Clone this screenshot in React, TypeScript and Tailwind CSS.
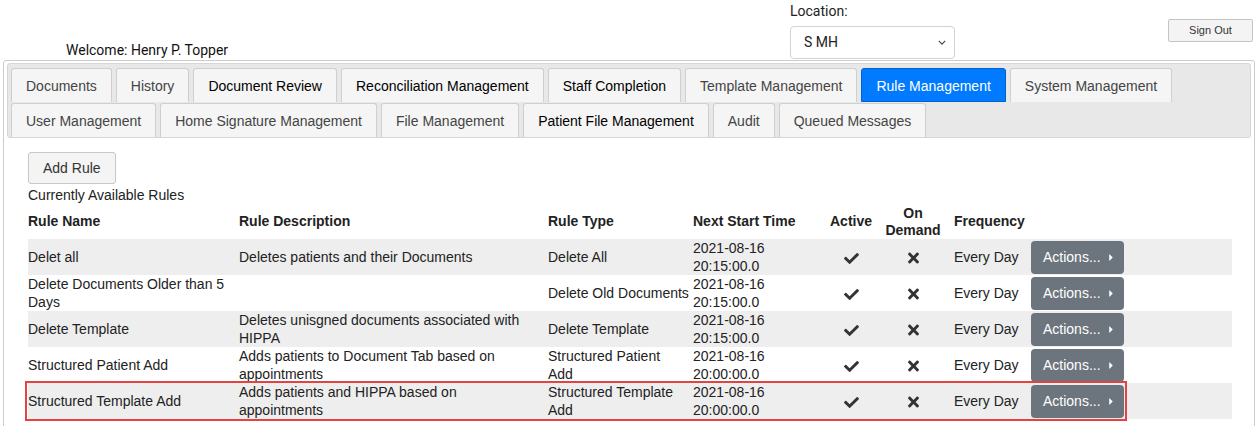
import React from 'react';

const rowOneTabs = [
  { label: 'Documents', dark: false },
  { label: 'History', dark: false },
  { label: 'Document Review', dark: true },
  { label: 'Reconciliation Management', dark: true },
  { label: 'Staff Completion', dark: true },
  { label: 'Template Management', dark: false },
  { label: 'Rule Management', dark: false, active: true },
  { label: 'System Management', dark: false },
];

const rowTwoTabs = [
  { label: 'User Management', dark: false },
  { label: 'Home Signature Management', dark: false },
  { label: 'File Management', dark: false },
  { label: 'Patient File Management', dark: true },
  { label: 'Audit', dark: false },
  { label: 'Queued Messages', dark: false },
];

// line breaks kept as in the original table rendering
const rules = [
  { name: 'Delet all', desc: 'Deletes patients and their Documents', type: 'Delete All', time: '20:15:00.0' },
  { name: 'Delete Documents Older than 5\nDays', desc: '', type: 'Delete Old Documents', time: '20:15:00.0' },
  { name: 'Delete Template', desc: 'Deletes unisgned documents associated with\nHIPPA', type: 'Delete Template', time: '20:15:00.0' },
  { name: 'Structured Patient Add', desc: 'Adds patients to Document Tab based on\nappointments', type: 'Structured Patient\nAdd', time: '20:00:00.0' },
  { name: 'Structured Template Add', desc: 'Adds patients and HIPPA based on\nappointments', type: 'Structured Template\nAdd', time: '20:00:00.0' },
];

type Tab = { label: string; dark: boolean; active?: boolean };

function TabButton({ tab }: { tab: Tab }) {
  if (tab.active) {
    return (
      <div className="h-[34px] flex items-center pt-[2px] px-[14px] border border-[#0062cc] rounded-t-[3px] bg-[#007bff] text-white">
        {tab.label}
      </div>
    );
  }
  return (
    <div
      className={
        'h-[34px] flex items-center pt-[2px] px-[14px] border border-[#cfcfcf] border-b-0 rounded-t-[3px] bg-[#f5f5f5] ' +
        (tab.dark ? 'text-[#000]' : 'text-[#444]')
      }
    >
      {tab.label}
    </div>
  );
}

function CheckIcon() {
  return (
    <svg viewBox="0 0 512 512" className="w-[15px] h-[15px] inline-block" fill="#333">
      <path d="M173.898 439.404l-166.4-166.4c-9.997-9.997-9.997-26.206 0-36.204l36.203-36.204c9.997-9.998 26.207-9.998 36.204 0L192 312.69 432.095 72.596c9.997-9.997 26.207-9.997 36.204 0l36.203 36.204c9.997 9.997 9.997 26.206 0 36.204l-294.4 294.401c-9.998 9.997-26.207 9.997-36.204-.001z" />
    </svg>
  );
}

function TimesIcon() {
  return (
    <svg viewBox="0 0 352 512" className="w-[11px] h-[16px] inline-block" fill="#333">
      <path d="M242.72 256l100.07-100.07c12.28-12.28 12.28-32.19 0-44.48l-22.24-22.240c-12.28-12.28-32.19-12.28-44.48 0L176 189.28 75.93 89.21c-12.28-12.28-32.19-12.28-44.48 0L9.21 111.45c-12.28 12.28-12.28 32.19 0 44.48L109.28 256 9.21 356.07c-12.28 12.28-12.28 32.19 0 44.48l22.24 22.24c12.28 12.28 32.2 12.28 44.48 0L176 322.72l100.07 100.07c12.28 12.28 32.2 12.28 44.48 0l22.24-22.24c12.28-12.28 12.28-32.19 0-44.48L242.72 256z" />
    </svg>
  );
}

export default function App() {
  return (
    <div className="w-[1258px] h-[426px] overflow-hidden bg-white text-[14px] text-[#222] font-['Liberation_Sans',Arial,sans-serif]">
      {/* header: welcome, location picker, sign out */}
      <div className="flex h-[60px]">
        <div className="w-[790px] pl-[66px] pt-[40px] text-[14px] text-[#111] font-['Roboto',sans-serif]">
          Welcome: Henry P. Topper
        </div>
        <div className="w-[378px] pt-[1px] font-['Roboto',sans-serif] text-[#222]">
          <div className="h-[20px] leading-[20px]">Location:</div>
          <div className="mt-[5px] w-[165px] h-[33px] border border-[#ced4da] rounded-[4px] flex items-center justify-between pl-[13px] pr-[8px] bg-white">
            <span>S MH</span>
            <svg viewBox="0 0 10 6" className="w-[8px] h-[5px]" fill="none" stroke="#444" strokeWidth="1.4">
              <path d="M1 1l4 4 4-4" />
            </svg>
          </div>
        </div>
        <div className="pt-[19px]">
          <button className="w-[85px] h-[23px] border border-[#c4c4c4] rounded-[2px] bg-[#f4f4f4] text-[11px] text-[#333]">
            Sign Out
          </button>
        </div>
      </div>

      {/* main panel */}
      <div className="mx-[3px] h-[380px] border border-[#cccccc] rounded-[3px] px-[3px] pt-[2px]">
        <div className="bg-[#e8e8e8] border border-[#d6d6d6] rounded-[3px] px-[3px] pt-[4px] flex flex-col gap-[1px]">
          <div className="flex gap-[4px]">
            {rowOneTabs.map((t) => (
              <TabButton key={t.label} tab={t} />
            ))}
          </div>
          <div className="flex gap-[4px]">
            {rowTwoTabs.map((t) => (
              <TabButton key={t.label} tab={t} />
            ))}
          </div>
        </div>

        <div className="pl-[21px] pt-[14px]">
          <button className="h-[32px] px-[14px] border border-[#c8c8c8] rounded-[3px] bg-[#f4f4f4] text-[#333]">
            Add Rule
          </button>
          <div className="mt-[2px] h-[18px] leading-[18px] text-[#222]">Currently Available Rules</div>

          <div className="relative w-[1204px]">
            <table className="w-[1204px] table-fixed border-collapse leading-[18px]">
              <colgroup>
                <col className="w-[211px]" />
                <col className="w-[309px]" />
                <col className="w-[145px]" />
                <col className="w-[132px]" />
                <col className="w-[52px]" />
                <col className="w-[72px]" />
                <col className="w-[82px]" />
                <col className="w-[201px]" />
              </colgroup>
              <thead>
                <tr className="h-[35px] font-bold text-[#222] leading-[17px]">
                  <th className="text-left align-middle p-0">Rule Name</th>
                  <th className="text-left align-middle p-0">Rule Description</th>
                  <th className="text-left align-middle p-0">Rule Type</th>
                  <th className="text-left align-middle p-0">Next Start Time</th>
                  <th className="text-center align-middle p-0">Active</th>
                  <th className="text-center align-middle p-0">
                    On
                    <br />
                    Demand
                  </th>
                  <th className="text-left align-middle p-0 pl-[5px]">Frequency</th>
                  <th className="p-0" />
                </tr>
              </thead>
              <tbody>
                {rules.map((r, i) => (
                  <tr key={r.name} className={'h-[36px] ' + (i % 2 === 0 ? 'bg-[#eeeeee]' : 'bg-white')}>
                    <td className="align-middle p-0 whitespace-pre-line">{r.name}</td>
                    <td className="align-middle p-0 whitespace-pre-line">{r.desc}</td>
                    <td className="align-middle p-0 whitespace-pre-line">{r.type}</td>
                    <td className="align-middle p-0">
                      2021-08-16
                      <br />
                      {r.time}
                    </td>
                    <td className="align-middle p-0 text-center">
                      <CheckIcon />
                    </td>
                    <td className="align-middle p-0 text-center">
                      <TimesIcon />
                    </td>
                    <td className="align-middle p-0 pl-[5px]">Every Day</td>
                    <td className="align-middle p-0">
                      <button className="h-[33px] w-[93px] rounded-[4px] bg-[#6c757d] text-white flex items-center pl-[12px] gap-[8px]">
                        <span>Actions...</span>
                        <svg viewBox="0 0 4 8" className="w-[4px] h-[7px]" fill="white">
                          <path d="M0 0l4 4-4 4z" />
                        </svg>
                      </button>
                    </td>
                  </tr>
                ))}
              </tbody>
            </table>
            {/* highlight box around the last row */}
            <div className="absolute left-[-3px] bottom-[-2px] w-[1102px] h-[40px] border-2 border-[#e24343] pointer-events-none" />
          </div>
        </div>
      </div>
    </div>
  );
}
